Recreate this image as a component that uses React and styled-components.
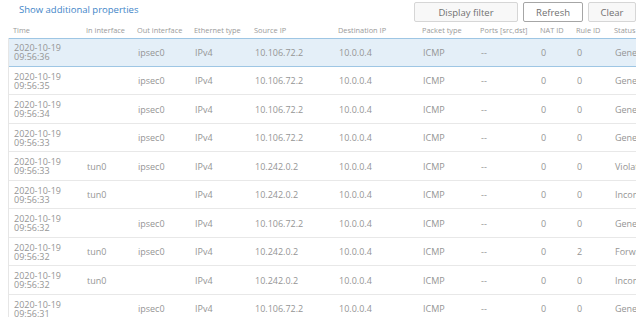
import React from "react";
import styled, { createGlobalStyle } from "styled-components";

const Global = createGlobalStyle`
  html, body {
    margin: 0;
    padding: 0;
    background: #ffffff;
    font-family: 'Open Sans', 'Liberation Sans', sans-serif;
  }
`;

const Page = styled.div`
  width: 640px;
  height: 317px;
  overflow: hidden;
`;

const Toolbar = styled.div`
  display: flex;
  align-items: center;
  height: 24px;
  padding: 0 4px 0 19px;
`;

const Link = styled.a`
  font-size: 9.5px;
  color: #3f86c8;
  text-decoration: none;
  margin-top: -5px;
`;

const Buttons = styled.div`
  margin-left: auto;
  display: flex;
  gap: 5px;
`;

const Button = styled.button`
  width: ${(p) => p.w}px;
  height: 20px;
  padding: 0;
  font-family: inherit;
  font-size: 9.5px;
  color: #707070;
  background: ${(p) => (p.active ? "#ffffff" : "#f8f8f8")};
  border: 1px solid ${(p) => (p.active ? "#a6a6a6" : "#d6d6d6")};
  border-radius: 2px;
`;

const Table = styled.div`
  margin-left: 8px;
  width: 628px;
  overflow: hidden;
`;

const cols = "72px 51px 57px 60px 84px 84px 58px 60px 36px 38px 60px";

const HeadRow = styled.div`
  display: grid;
  grid-template-columns: ${cols};
  height: 14px;
  align-items: center;
  font-size: 7.4px;
  color: #9a9a9a;
`;

const Body = styled.div`
  border-left: 1px solid #e6e6e6;
`;

const Row = styled.div`
  display: grid;
  grid-template-columns: ${cols};
  height: 28.5px;
  align-items: center;
  box-sizing: border-box;
  font-size: 9px;
  color: #959595;
  background: ${(p) => (p.selected ? "#e4eff8" : "#ffffff")};
  border-top: 1px solid ${(p) => (p.selected ? "#9ec6e4" : "transparent")};
  border-bottom: 1px solid ${(p) => (p.selected ? "#9ec6e4" : "#e8e8e8")};
`;

const Cell = styled.div`
  padding-left: ${(p) => (p.first ? 5 : 6)}px;
  white-space: nowrap;
  line-height: 9px;
`;

const Head = styled(Cell)`
  line-height: 12px;
  margin-top: -2px;
`;

const headers = [
  "Time",
  "In interface",
  "Out interface",
  "Ethernet type",
  "Source IP",
  "Destination IP",
  "Packet type",
  "Ports [src,dst]",
  "NAT ID",
  "Rule ID",
  "Status",
];

const rows = [
  ["09:56:36", "", "ipsec0", "10.106.72.2", "0", "Generated"],
  ["09:56:35", "", "ipsec0", "10.106.72.2", "0", "Generated"],
  ["09:56:34", "", "ipsec0", "10.106.72.2", "0", "Generated"],
  ["09:56:33", "", "ipsec0", "10.106.72.2", "0", "Generated"],
  ["09:56:33", "tun0", "ipsec0", "10.242.0.2", "0", "Violation"],
  ["09:56:33", "tun0", "", "10.242.0.2", "0", "Incomplete"],
  ["09:56:32", "", "ipsec0", "10.106.72.2", "0", "Generated"],
  ["09:56:32", "tun0", "ipsec0", "10.242.0.2", "2", "Forwarded"],
  ["09:56:32", "tun0", "", "10.242.0.2", "0", "Incomplete"],
  ["09:56:31", "", "ipsec0", "10.106.72.2", "0", "Generated"],
];

export default function App() {
  return (
    <Page>
      <Global />
      <Toolbar>
        <Link href="#">Show additional properties</Link>
        <Buttons>
          <Button w={104}>Display filter</Button>
          <Button w={60} active>Refresh</Button>
          <Button w={48}>Clear</Button>
        </Buttons>
      </Toolbar>
      <Table>
        <HeadRow>
          {headers.map((h, i) => (
            <Head key={h} first={i === 0}>{h}</Head>
          ))}
        </HeadRow>
        <Body>
          {rows.map(([time, inIf, outIf, src, rule, status], i) => (
            <Row key={i} selected={i === 0}>
              <Cell first>
                2020-10-19
                <br />
                {time}
              </Cell>
              <Cell>{inIf}</Cell>
              <Cell>{outIf}</Cell>
              <Cell>IPv4</Cell>
              <Cell>{src}</Cell>
              <Cell>10.0.0.4</Cell>
              <Cell>ICMP</Cell>
              <Cell>--</Cell>
              <Cell>0</Cell>
              <Cell>{rule}</Cell>
              <Cell>{status}</Cell>
            </Row>
          ))}
        </Body>
      </Table>
    </Page>
  );
}
